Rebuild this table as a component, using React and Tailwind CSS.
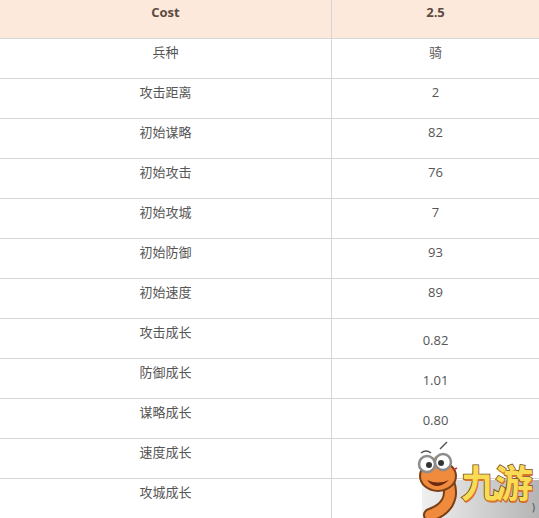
import React from 'react';

const rows = [
  { label: '兵种', value: '骑' },
  { label: '攻击距离', value: '2' },
  { label: '初始谋略', value: '82' },
  { label: '初始攻击', value: '76' },
  { label: '初始攻城', value: '7' },
  { label: '初始防御', value: '93' },
  { label: '初始速度', value: '89' },
  { label: '攻击成长', value: '0.82', low: true },
  { label: '防御成长', value: '1.01', low: true },
  { label: '谋略成长', value: '0.80', low: true },
  { label: '速度成长', value: '1.00', low: true },
  { label: '攻城成长', value: '', low: true },
];

// mascot of the 九游 watermark
const Mascot = () => (
  <svg width="46" height="78" viewBox="0 0 46 78" className="shrink-0">
    <path d="M32 42 C38 58 30 70 14 75" fill="none" stroke="#7a3f17" strokeWidth="14" strokeLinecap="round" />
    <path d="M32 42 C38 58 30 70 14 75" fill="none" stroke="#f08a3c" strokeWidth="10" strokeLinecap="round" />
    <ellipse cx="22" cy="36" rx="18" ry="15" fill="#f08a3c" stroke="#7a3f17" strokeWidth="2" />
    <path d="M5 13 Q10 9 15 13" fill="none" stroke="#555" strokeWidth="1.5" />
    <path d="M24 9 Q28 5 31 2" fill="none" stroke="#555" strokeWidth="1.5" />
    <circle cx="11" cy="24" r="8" fill="#fff" stroke="#8c8c8c" strokeWidth="2.5" />
    <circle cx="27" cy="22" r="8" fill="#fff" stroke="#8c8c8c" strokeWidth="2.5" />
    <circle cx="13" cy="25" r="3" fill="#333" />
    <circle cx="25" cy="23" r="3" fill="#333" />
    <path d="M11 40 Q20 52 33 40 Q22 45 11 40 Z" fill="#6b2a10" />
    <path d="M37 30 L41 28" stroke="#c0392b" strokeWidth="1.5" />
  </svg>
);

// 九游 watermark, sits over the table's bottom-right corner
const Watermark = () => (
  <div className="absolute left-[416px] top-[440px] w-[123px] h-[78px] pointer-events-none flex flex-col">
    <div className="relative z-10 flex items-start h-[78px] shrink-0">
      <Mascot />
      <div
        className="mt-[20px] -ml-[1px] text-[38px] leading-[42px] font-bold tracking-[-4px] text-[#f9dc55] [-webkit-text-stroke:1.5px_#6e4418] [paint-order:stroke_fill] [text-shadow:1px_2px_0_#d9742a]"
        style={{ fontFamily: '"Noto Sans CJK SC", sans-serif' }}
      >
        九游
      </div>
      <span className="self-end mb-[6px] ml-auto mr-[4px] text-[10px] leading-none text-[#444]">)</span>
    </div>
    <div className="-mt-[38px] ml-[6px] h-[38px] shrink-0 bg-[#d0d0d0] bg-linear-to-r from-[#f0f0f0] to-[#b4b4b4]" />
  </div>
);

export default function App() {
  return (
    <div
      className="relative w-[539px] h-[518px] overflow-hidden bg-white text-[13px] text-[#555]"
      style={{ fontFamily: '"Open Sans", "Noto Sans CJK SC", sans-serif' }}
    >
      <div className="grid grid-cols-[332px_1fr]">
        <div className="h-[39px] pt-[2px] leading-[20px] text-center font-bold text-[#5b4b42] bg-[#fde9db] border-b border-r border-[#d6d6d6]">
          Cost
        </div>
        <div className="h-[39px] pt-[2px] leading-[20px] text-center font-bold text-[#5b4b42] bg-[#fde9db] border-b border-[#d6d6d6]">
          2.5
        </div>
        {rows.map((r) => (
          <React.Fragment key={r.label}>
            <div className="h-10 pt-[3px] leading-[20px] text-center border-b border-r border-[#d6d6d6]">
              {r.label}
            </div>
            <div className={`h-10 leading-[20px] text-center border-b border-[#d6d6d6] ${r.low ? 'pt-[11px]' : 'pt-[3px]'}`}>
              {r.value}
            </div>
          </React.Fragment>
        ))}
      </div>
      <Watermark />
    </div>
  );
}
